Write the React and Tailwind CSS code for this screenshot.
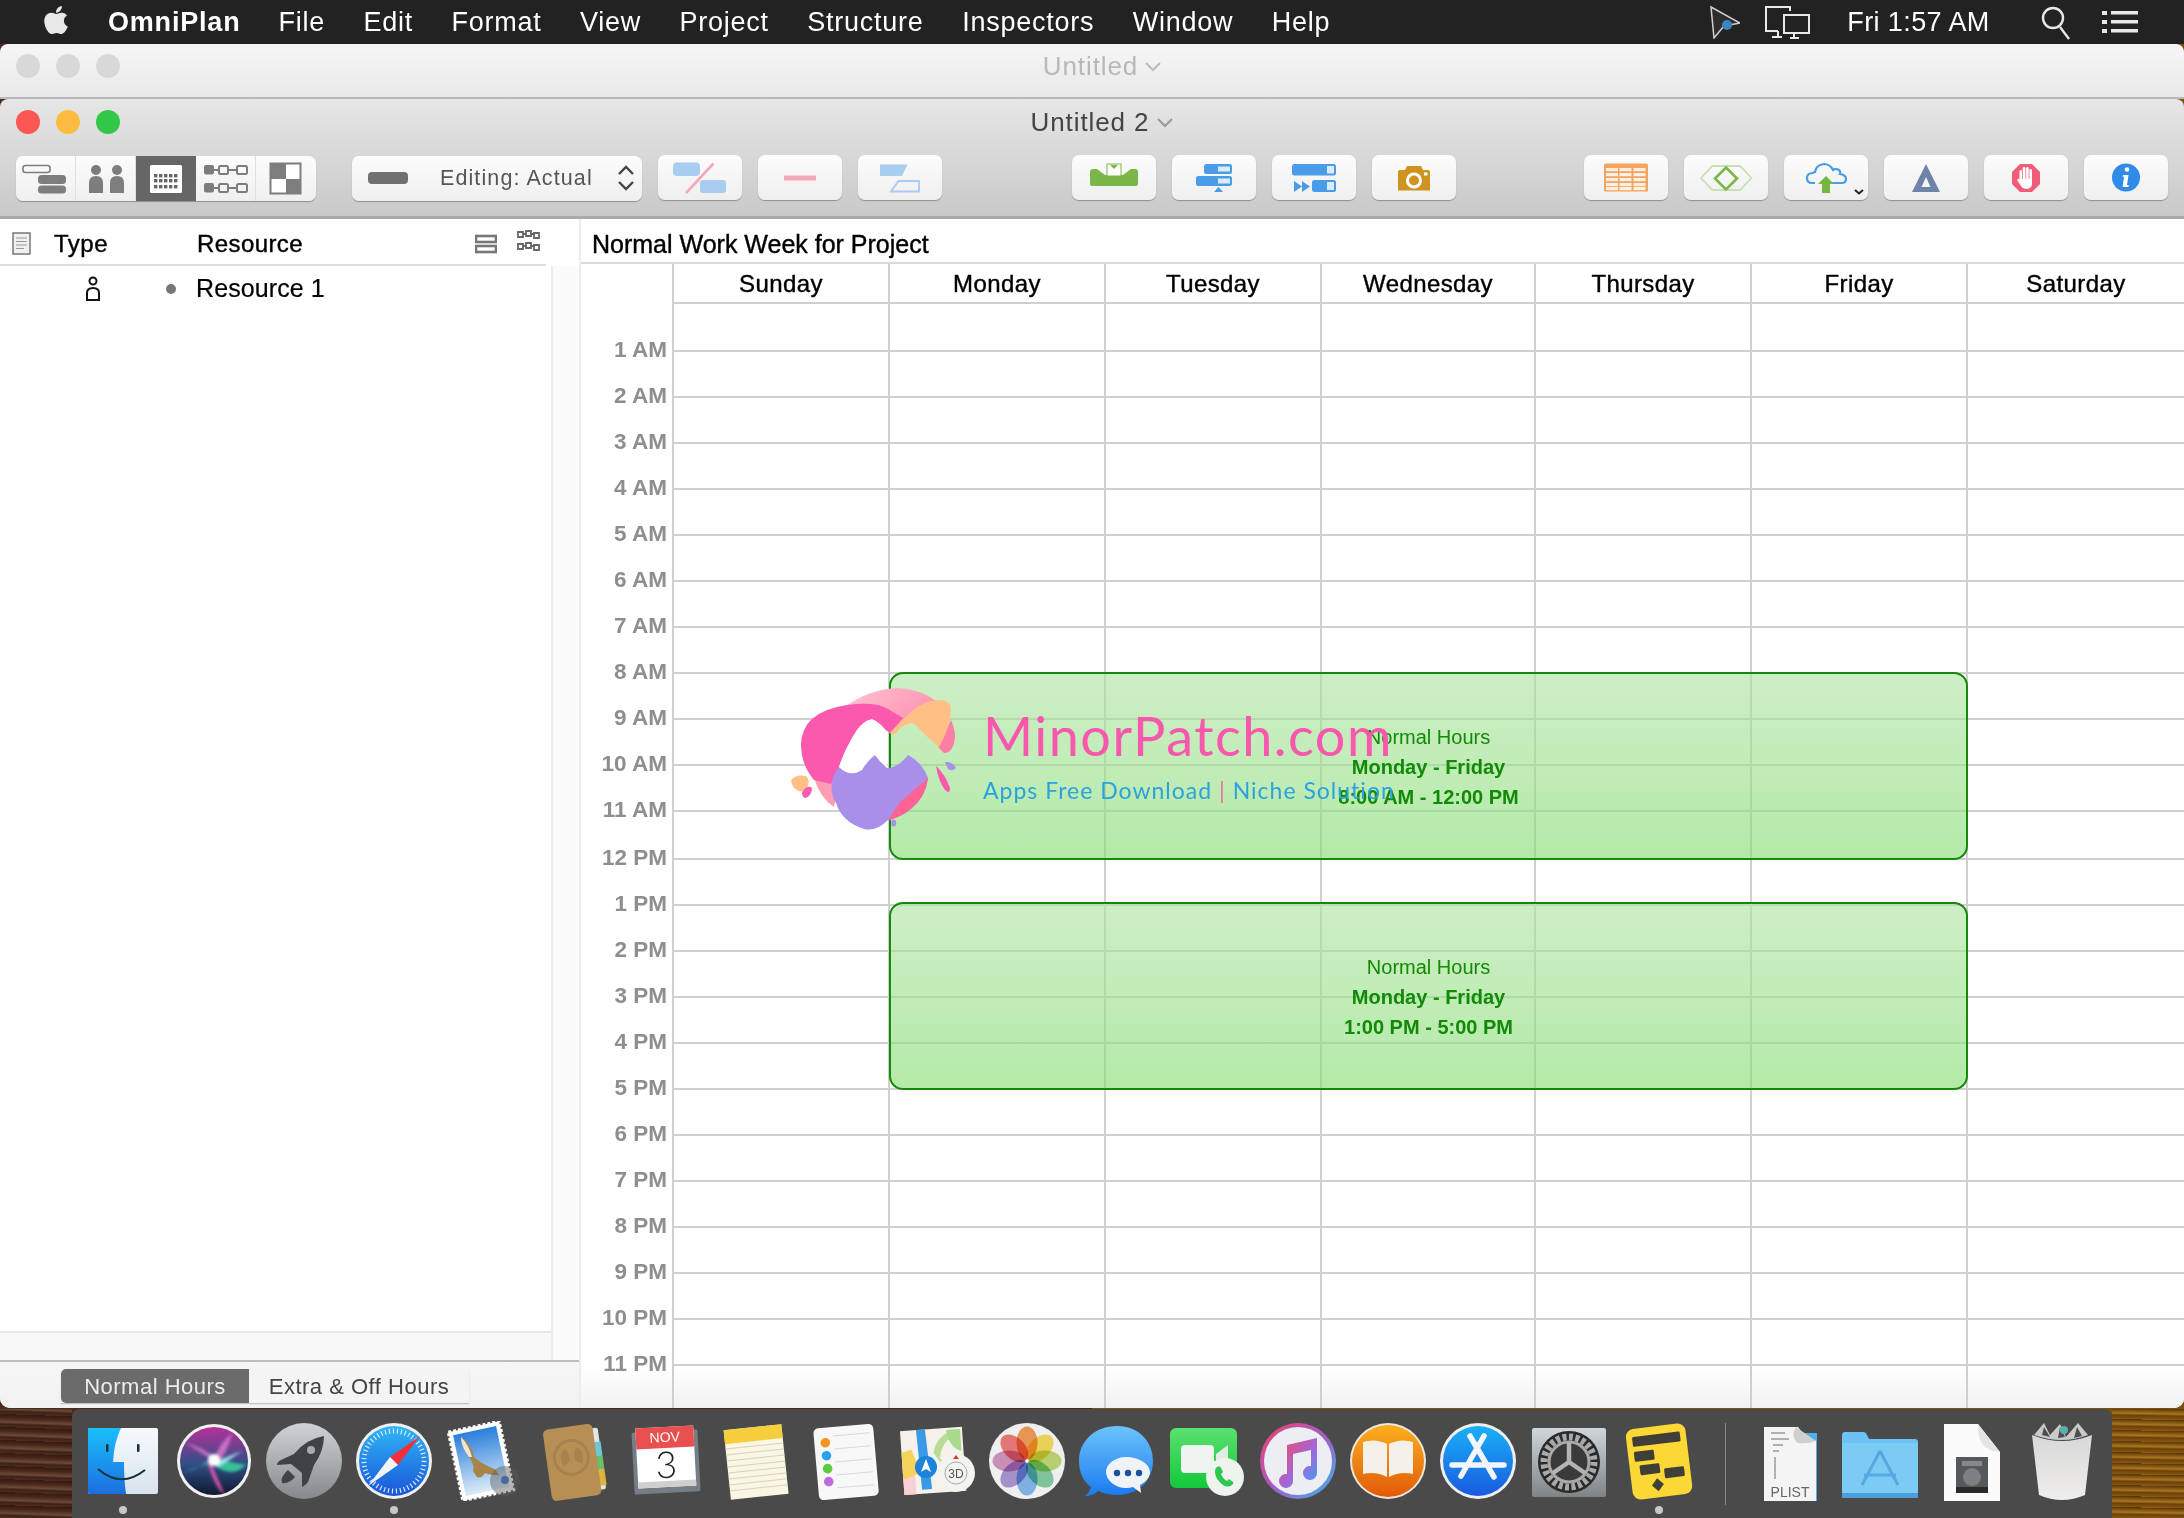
import React from "react";
import { FaApple } from "react-icons/fa";

const menuItems = ["File", "Edit", "Format", "View", "Project", "Structure", "Inspectors", "Window", "Help"];
const days = ["Sunday", "Monday", "Tuesday", "Wednesday", "Thursday", "Friday", "Saturday"];
const gridCols = "grid grid-cols-[91px_216px_216px_216px_214px_216px_216px_218px]";
const hourRows = [
    ["1 AM", "h-[48px]"], ["2 AM", "h-[46px]"], ["3 AM", "h-[46px]"], ["4 AM", "h-[46px]"],
    ["5 AM", "h-[46px]"], ["6 AM", "h-[46px]"], ["7 AM", "h-[46px]"], ["8 AM", "h-[46px]"],
    ["9 AM", "h-[46px]"], ["10 AM", "h-[46px]"], ["11 AM", "h-[46px]"], ["12 PM", "h-[48px]"],
    ["1 PM", "h-[46px]"], ["2 PM", "h-[46px]"], ["3 PM", "h-[46px]"], ["4 PM", "h-[46px]"],
    ["5 PM", "h-[46px]"], ["6 PM", "h-[46px]"], ["7 PM", "h-[46px]"], ["8 PM", "h-[46px]"],
    ["9 PM", "h-[46px]"], ["10 PM", "h-[46px]"], ["11 PM", "h-[46px]"],
];

const Light = ({ color }) => <div className={`w-[24px] h-[24px] rounded-full ${color}`} />;

const ToolButton = ({ children }) => (
    <div className="w-[84px] h-[45px] rounded-[7px] bg-gradient-to-b from-[#fcfcfc] to-[#efefef] shadow-[0_1px_1px_rgba(0,0,0,0.3)]">
        <svg width="84" height="45" viewBox="0 0 84 45">{children}</svg>
    </div>
);

const Segment = ({ active, last, children }) => (
    <div className={`h-[45px] ${active ? "w-[60px] bg-[#666666]" : last ? "w-[60px]" : "w-[60px] border-r border-[#e0e0e0]"}`}>
        <svg width="60" height="45" viewBox="0 0 60 45">{children}</svg>
    </div>
);

const ChainRow = ({ y }) => (
    <g>
        <rect x="8" y={y} width="10" height="9.5" rx="2" fill="#7d7d7d" />
        <rect x="23" y={y + 1} width="9" height="8" rx="1.5" fill="none" stroke="#7d7d7d" strokeWidth="2" />
        <rect x="41" y={y + 1} width="10" height="8" rx="1.5" fill="none" stroke="#7d7d7d" strokeWidth="2" />
        <path d={`M18 ${y + 5}h5M32 ${y + 5}h9`} stroke="#7d7d7d" strokeWidth="2" />
    </g>
);

const Toolbar = () => (
    <div className="flex items-start pl-[16px] pt-[10px]">
        <div className="flex w-[300px] h-[45px] rounded-[7px] overflow-hidden bg-gradient-to-b from-[#fcfcfc] to-[#efefef] shadow-[0_1px_1px_rgba(0,0,0,0.3)]">
            <Segment>
                <rect x="7" y="9.5" width="27" height="7" rx="2.5" fill="none" stroke="#7d7d7d" strokeWidth="1.6" />
                <rect x="22" y="19" width="28" height="9" rx="3.5" fill="#7d7d7d" />
                <rect x="22" y="29.5" width="28" height="8" rx="3.5" fill="#7d7d7d" />
            </Segment>
            <Segment>
                <circle cx="20" cy="14" r="5" fill="#7d7d7d" />
                <circle cx="41" cy="14" r="5" fill="#7d7d7d" />
                <path d="M13 37v-10q0-7 7-7t7 7v10zM34 37v-10q0-7 7-7t7 7v10z" fill="#7d7d7d" />
            </Segment>
            <Segment active>
                <rect x="14" y="9" width="32" height="28" rx="1.5" fill="#fff" />
                {[18, 23, 28, 33, 38].map(x => [18, 23, 29].map(y => <rect key={`${x}-${y}`} x={x} y={y} width="3.4" height="3.4" fill="#666" />))}
            </Segment>
            <Segment>
                <ChainRow y={9} />
                <ChainRow y={27} />
            </Segment>
            <Segment last>
                <rect x="14.5" y="7.5" width="30" height="30" fill="#fff" stroke="#7d7d7d" strokeWidth="2" />
                <rect x="15" y="8" width="15" height="15" fill="#7d7d7d" />
                <rect x="30" y="23" width="15" height="15" fill="#7d7d7d" />
            </Segment>
        </div>

        <div className="ml-[36px] w-[290px] h-[45px] rounded-[7px] bg-gradient-to-b from-[#fcfcfc] to-[#efefef] shadow-[0_1px_1px_rgba(0,0,0,0.3)] flex items-center pl-[16px]">
            <div className="w-[40px] h-[12px] rounded-[4px] bg-[#707070]" />
            <span className="ml-[32px] text-[21.5px] text-[#555555] tracking-[1.1px]">Editing: Actual</span>
            <svg className="ml-[24px]" width="18" height="28" viewBox="0 0 18 28" fill="none" stroke="#444" strokeWidth="2.4">
                <path d="M2 10l7-7 7 7M2 18l7 7 7-7" />
            </svg>
        </div>

        <div className="ml-[16px] flex gap-[16px] -mt-[1px]">
            <ToolButton>
                <rect x="15" y="7.5" width="27" height="13.5" rx="4" fill="#a8cdf0" />
                <rect x="42" y="25" width="26" height="13" rx="3" fill="#a8cdf0" />
                <path d="M55.5 8.5L28 38" stroke="#f4a9bb" strokeWidth="2.6" />
            </ToolButton>
            <ToolButton>
                <rect x="26" y="20.5" width="32" height="5" fill="#f4a9bb" />
            </ToolButton>
            <ToolButton>
                <path d="M22 9.5h27.5L44 21H22z" fill="#a8cdf0" />
                <path d="M40.5 26h20.5v10.5H33z" fill="none" stroke="#a8cdf0" strokeWidth="2" />
            </ToolButton>
        </div>

        <div className="ml-[130px] flex gap-[16px] -mt-[1px]">
            <ToolButton>
                <path d="M18 17q0-3 3-3h4l8 6h18l8-6h4q3 0 3 3v12q0 2-2 2H20q-2 0-2-2z" fill="#7ab648" />
                <rect x="35" y="9" width="14" height="12" fill="#fff" stroke="#7ab648" strokeWidth="1" />
                <path d="M38 10h8l-4 4z" fill="#7ab648" />
            </ToolButton>
            <ToolButton>
                <rect x="32" y="9" width="28" height="10" rx="2.5" fill="#4a9be8" />
                <rect x="46" y="11.5" width="12" height="5" fill="#dcebfa" />
                <rect x="24" y="21" width="36" height="10" rx="2.5" fill="#4a9be8" />
                <rect x="46" y="23.5" width="12" height="5" fill="#dcebfa" />
                <path d="M46.5 32l4.5 5h-9z" fill="#4a9be8" />
            </ToolButton>
            <ToolButton>
                <rect x="20" y="9" width="44" height="11.5" rx="2.5" fill="#4a9be8" />
                <rect x="55" y="11" width="7" height="7.5" fill="#dcebfa" />
                <rect x="40" y="25" width="24" height="12" rx="2.5" fill="#4a9be8" />
                <rect x="55" y="27" width="7" height="8" fill="#dcebfa" />
                <path d="M22 26l8 5.5-8 5.5zM30 26l8 5.5-8 5.5z" fill="#4a9be8" />
            </ToolButton>
            <ToolButton>
                <path d="M26 17q0-2 2-2h5l2-4h14l2 4h5q2 0 2 2v18.5H26z" fill="#cf9320" />
                <circle cx="42" cy="25.5" r="6.5" fill="none" stroke="#fff" strokeWidth="3" />
                <rect x="52" y="17.5" width="3.5" height="3" fill="#fff" />
            </ToolButton>
        </div>

        <div className="ml-[128px] flex gap-[16px] -mt-[1px]">
            <ToolButton>
                <rect x="20" y="8.5" width="44" height="28" rx="1.5" fill="#f4a460" />
                {[22, 35.5, 49.5].map(x => [13, 18, 23, 28, 32].map(y => <rect key={`${x}-${y}`} x={x} y={y} width="12" height="3.2" fill="#fdf0e0" />))}
            </ToolButton>
            <ToolButton>
                <path d="M17 23l11.5-12h27.5l11.5 12-11.5 12H28.5z" fill="none" stroke="#c8e0b8" strokeWidth="1.8" />
                <path d="M42 12.5l11 11-11 11-11-11z" fill="none" stroke="#7ab648" strokeWidth="2.6" />
            </ToolButton>
            <ToolButton>
                <path d="M31 28h-3q-5 0-5-5t6-5q1-1 2-1 1-7 9-8 6 0 9 6 3-2 6 0 2 2 1 4 6 1 6 5 0 4-4 4H48" fill="none" stroke="#4a9be8" strokeWidth="2.2" />
                <path d="M42 21l8 8h-4v9h-8v-9h-4z" fill="#76b83f" />
                <path d="M71 35l4 3.5 4-3.5" fill="none" stroke="#222" strokeWidth="2" />
            </ToolButton>
            <ToolButton>
                <path fillRule="evenodd" d="M42 9l14 28H28zM42 22l-4.5 10h9z" fill="#6f82a8" />
            </ToolButton>
            <ToolButton>
                <path d="M36 9h12l8 8v12l-8 8H36l-8-8V17z" fill="#f25c78" />
                <rect x="35.5" y="15" width="2.6" height="12" rx="1.3" fill="#fff" />
                <rect x="38.8" y="12" width="2.6" height="14" rx="1.3" fill="#fff" />
                <rect x="42.1" y="12" width="2.6" height="14" rx="1.3" fill="#fff" />
                <rect x="45.4" y="14" width="2.6" height="14" rx="1.3" fill="#fff" />
                <path d="M35.5 24h12.5v5q0 4-5 5-4 0-6-3l-4-6q1-2 3-1z" fill="#fff" />
            </ToolButton>
            <ToolButton>
                <circle cx="42" cy="22.5" r="14" fill="#2f8ae8" />
                <circle cx="43" cy="14.5" r="2.3" fill="#fff" />
                <path d="M39 20h5.5l-1.500 10 2 .5-.5 1.5h-6l1.5-10-1.5-.5z" fill="#fff" />
            </ToolButton>
        </div>
    </div>
);

const LeftPane = () => (
    <div className="w-[581px] flex flex-col border-r-2 border-[#ececec]">
        <div className="h-[47px] flex items-center pt-[5px] border-b-2 border-[#dcdcdc] mr-[33px]">
            <svg className="ml-[12px]" width="19" height="23" viewBox="0 0 19 23">
                <rect x="1" y="1" width="17" height="21" fill="#f0f0f0" stroke="#777" strokeWidth="1.5" />
                <path d="M4 6h11M4 9.5h11M4 13h11M4 16.5h8" stroke="#999" strokeWidth="1.2" />
            </svg>
            <span className="ml-[23px] text-[24px] tracking-[0.5px] [-webkit-text-stroke:0.4px_#000] text-black">Type</span>
            <span className="ml-[89px] text-[24px] tracking-[0.4px] [-webkit-text-stroke:0.4px_#000] text-black">Resource</span>
            <svg className="ml-[172px]" width="22" height="20" viewBox="0 0 22 20" fill="none" stroke="#777" strokeWidth="2.6">
                <rect x="1" y="2" width="20" height="6" />
                <rect x="1" y="12" width="20" height="6" />
            </svg>
            <svg className="ml-[20px] -mt-[3px]" width="23" height="24" viewBox="0 0 23 24" fill="none" stroke="#666" strokeWidth="1.8">
                <path d="M1 2h5v5H1zM9 1h5v5H9zM17 3h5v5h-5zM6 4h3M14 4h3M1 14h5v5H1zM9 13h5v5H9zM17 15h5v5h-5zM6 16h3M14 16h3" />
            </svg>
        </div>
        <div className="flex-1 flex min-h-0">
            <div className="w-[551px] flex flex-col">
                <div className="flex-1 bg-white border-b-2 border-[#e8e8e8]">
                    <div className="h-[46px] flex items-center">
                        <svg className="ml-[84px]" width="18" height="26" viewBox="0 0 18 26" fill="none" stroke="#111" strokeWidth="2">
                            <circle cx="9" cy="5" r="3.5" />
                            <path d="M3 24v-7q0-5 6-5t6 5v7z" />
                        </svg>
                        <div className="ml-[64px] w-[10px] h-[10px] rounded-full bg-[#777777]" />
                        <span className="ml-[20px] text-[25px] tracking-[0.1px] [-webkit-text-stroke:0.2px_#000] text-black">Resource 1</span>
                    </div>
                </div>
                <div className="h-[27px] bg-[#f8f8f8]" />
            </div>
            <div className="w-[28px] bg-[#fbfbfb] border-l-2 border-[#ececec]" />
        </div>
        <div className="h-[48px] border-t-2 border-[#bdbdbd] bg-gradient-to-b from-[#f6f6f6] to-[#f1f1f1] pt-[7px] pl-[61px]">
            <div className="flex h-[34px] w-[408px] shadow-[0_1px_1px_rgba(0,0,0,0.2)]">
                <div className="w-[188px] rounded-l-[5px] bg-[#6b6b6b] text-[#ececec] text-[22px] tracking-[0.5px] flex items-center justify-center">Normal Hours</div>
                <div className="w-[220px] bg-[#f4f4f4] text-[#444444] text-[22px] tracking-[0.5px] flex items-center justify-center">Extra &amp; Off Hours</div>
            </div>
        </div>
    </div>
);

const HoursBlock = ({ top, hours }) => (
    <div className={`absolute left-[308px] w-[1079px] ${top} rounded-[14px] border-2 border-[#148a08] bg-[linear-gradient(180deg,rgba(172,227,160,0.6),rgba(130,220,110,0.6))] flex flex-col items-center justify-center pt-[3px] text-[#118a05] text-[20px] leading-[30px]`}>
        <span>Normal Hours</span>
        <span className="font-bold">Monday - Friday</span>
        <span className="font-bold">{hours}</span>
    </div>
);

const Calendar = () => (
    <div className="flex-1 flex flex-col min-w-0 bg-white">
        <div className="h-[45px] flex items-center pl-[11px] pt-[8px] border-b-2 border-[#d8d8d8]">
            <span className="text-[25px] [-webkit-text-stroke:0.4px_#000] text-black">Normal Work Week for Project</span>
        </div>
        <div className={`${gridCols} h-[40px]`}>
            <div />
            {days.map(d => (
                <div key={d} className="border-l-2 border-b-2 border-[#cfcfcf] pt-[2px] flex items-center justify-center text-[24px] tracking-[0.4px] [-webkit-text-stroke:0.4px_#000] text-black">{d}</div>
            ))}
        </div>
        <div className="relative flex-1 flex flex-col min-h-0">
            {hourRows.map(([label, height]) => (
                <div key={label} className={`${gridCols} ${height}`}>
                    <div className="relative z-10 flex items-end justify-end pr-[5px]">
                        <span className="-mb-[11px] leading-[26px] text-[22.5px] font-bold text-[#8e8e8e]">{label}</span>
                    </div>
                    {days.map(d => <div key={d} className="border-l-2 border-b-2 border-[#cfcfcf]" />)}
                </div>
            ))}
            <div className={`${gridCols} flex-1 bg-gradient-to-b from-white to-[#f2f2f2]`}>
                <div />
                {days.map(d => <div key={d} className="border-l-2 border-[#cfcfcf]" />)}
            </div>
            <HoursBlock top="top-[368px] h-[188px]" hours="8:00 AM - 12:00 PM" />
            <HoursBlock top="top-[598px] h-[188px]" hours="1:00 PM - 5:00 PM" />
        </div>
    </div>
);

const Watermark = () => (
    <div className="absolute left-[790px] top-[688px] flex items-start pointer-events-none">
        <svg width="170" height="145" viewBox="0 0 170 145">
            <defs>
                <linearGradient id="wmTop" x1="0" y1="0" x2="1" y2="0.6">
                    <stop offset="0" stopColor="#ffc3d2" />
                    <stop offset="1" stopColor="#ff8fb0" />
                </linearGradient>
            </defs>
            <path d="M56 18Q80 1 108 0Q135 2 149 16L100 45Z" fill="url(#wmTop)" />
            <path d="M24 90Q30 110 44 119L50 90Z" fill="#ff9db5" />
            <path d="M11 59Q10 24 57 17Q85 13 98 21Q106 26 113 30L100 45L82 31Q72 33 66 44Q55 62 49 79L41 96L24 92Q12 78 11 59Z" fill="#fb59ae" />
            <path d="M82 31Q90 34 97 44V80L85 67Q78 72 72 82Q64 88 49 79Q55 60 67 42Q74 33 82 31Z" fill="#fff" />
            <path d="M161 32Q167 45 164 56Q160 66 154 65L148 59Z" fill="#fb7ea6" />
            <path d="M100 45Q112 32 123 22Q136 12 149 12Q161 12 161 23Q160 40 149 59Q134 46 123 35Q112 36 106 45Q102 48 100 45Z" fill="#ffbf85" />
            <path d="M85 67Q90 74 97 80Q108 80 118 67Q132 74 138 90Q136 108 122 120Q110 130 98 132Q86 144 74 141Q52 134 46 115Q40 104 42 95Q44 84 49 79Q60 90 72 82Q78 72 85 67Z" fill="#a98fe9" />
            <path d="M138 90Q136 108 122 120Q110 130 98 132L110 114Z" fill="#fd6495" />
            <path d="M1 92Q6 86 16 88Q20 92 18 98Q14 105 8 103Q2 100 1 92Z" fill="#ffbf85" />
            <path d="M12 104Q18 96 22 100Q22 107 16 110Q12 110 12 104Z" fill="#fb59ae" />
            <path d="M146 78Q155 86 160 100Q160 107 155 102Q148 92 146 78Z" fill="#fb59ae" />
            <path d="M155 74Q162 73 166 80Q162 84 158 81Z" fill="#a98fe9" />
            <ellipse cx="103.7" cy="135" rx="2.5" ry="3.5" fill="#a98fe9" />
        </svg>
        <div className="ml-[23px] mt-[18px] font-['Lato',sans-serif] whitespace-nowrap">
            <div className="text-[54px] leading-[60px] tracking-[1.5px] text-[#f857ad]">MinorPatch.com</div>
            <div className="mt-[9px] text-[23px] leading-[30px] tracking-[1px] text-[#2ba2dd]">
                Apps Free Download <span className="text-[#f06aa8]">|</span> Niche Solution
            </div>
        </div>
    </div>
);

const DockIcon = ({ children, running }) => (
    <div className="w-[90.35px] flex flex-col items-center">
        <svg width="80" height="80" viewBox="0 0 80 80" className="mt-[12px]">{children}</svg>
        {running ? <div className="mt-[5px] w-[8px] h-[8px] rounded-full bg-[#c8c8c8]" /> : null}
    </div>
);

const Dock = () => (
    <div className="h-[109px] flex overflow-hidden">
        <div className="w-[72px] bg-[repeating-linear-gradient(2deg,#4e2c1e_0px,#3e2218_3px,#6b4a3a_5px,#4a281a_9px,#35190f_13px)]" />
        <div className="w-[2040px] bg-[#4a4a4a] rounded-t-[8px] flex pl-[6px]">
            <DockIcon running>
                <defs>
                    <linearGradient id="fi" x1="0" y1="0" x2="0" y2="1"><stop offset="0" stopColor="#19c0fb" /><stop offset="1" stopColor="#1c6ee0" /></linearGradient>
                    <linearGradient id="fw" x1="0" y1="0" x2="0" y2="1"><stop offset="0" stopColor="#f6f9fc" /><stop offset="1" stopColor="#d8e3ee" /></linearGradient>
                </defs>
                <rect x="5" y="7" width="70" height="66" rx="2" fill="url(#fw)" />
                <path d="M7 7h31q-7 14-8 34h11q0 18 2 32H7q-2 0-2-2V9q0-2 2-2z" fill="url(#fi)" />
                <rect x="23" y="23" width="2.5" height="8" rx="1" fill="#133" />
                <rect x="54" y="23" width="2.5" height="8" rx="1" fill="#133" />
                <path d="M15 48Q38 68 62 49" fill="none" stroke="#133" strokeWidth="2" />
            </DockIcon>
            <DockIcon>
                <defs>
                    <linearGradient id="sr" x1="0" y1="0" x2="0" y2="1"><stop offset="0" stopColor="#b8309a" /><stop offset="0.55" stopColor="#2f4f86" /><stop offset="1" stopColor="#10182e" /></linearGradient>
                    <filter id="sb"><feGaussianBlur stdDeviation="1.5" /></filter>
                </defs>
                <circle cx="40" cy="40" r="37" fill="#f1f1f1" />
                <circle cx="40" cy="40" r="34" fill="url(#sr)" />
                <g filter="url(#sb)">
                    <path d="M40 40L12 22Q28 26 40 36Z M40 38Q46 22 58 12Q54 30 44 42Z" fill="#e07ad0" opacity="0.8" />
                    <path d="M40 40L8 52Q26 48 42 34Z" fill="#4fd6e8" opacity="0.9" />
                    <path d="M40 38L72 44Q58 58 40 44Z" fill="#3bd69c" opacity="0.85" />
                    <path d="M36 40L50 72Q44 72 34 44Z" fill="#e955b4" opacity="0.9" />
                    <path d="M38 42L68 30Q54 40 44 46Z" fill="#a5eef4" opacity="0.9" />
                    <circle cx="40" cy="39" r="6" fill="#fff" />
                </g>
            </DockIcon>
            <DockIcon>
                <defs>
                    <linearGradient id="lp" x1="0" y1="0" x2="0" y2="1"><stop offset="0" stopColor="#cfd3d5" /><stop offset="1" stopColor="#84898c" /></linearGradient>
                </defs>
                <circle cx="40" cy="40" r="38" fill="url(#lp)" />
                <path d="M60 15Q42 18 30 33L17 39Q13 41 13 44L27 43L38 52L38 66Q42 64 44 61L50 44Q60 30 60 15Z" fill="#3f4347" />
                <path d="M24 49Q16 56 18 62Q25 63 31 56Z" fill="#3f4347" />
                <circle cx="47" cy="29" r="4" fill="#a8acaf" />
            </DockIcon>
            <DockIcon running>
                <defs>
                    <linearGradient id="sa" x1="0" y1="0" x2="0" y2="1"><stop offset="0" stopColor="#2fb6f6" /><stop offset="1" stopColor="#1a55d8" /></linearGradient>
                </defs>
                <circle cx="40" cy="40" r="38" fill="#f0f0f0" />
                <circle cx="40" cy="40" r="35" fill="url(#sa)" />
                <circle cx="40" cy="40" r="30" fill="none" stroke="#d6e8fb" strokeWidth="5" strokeDasharray="1.2 2.8" />
                <path d="M66 15L36 36L44 44Z" fill="#f0313c" />
                <path d="M14 65L36 36L44 44Z" fill="#f4f4f4" />
            </DockIcon>
            <DockIcon>
                <defs>
                    <linearGradient id="ma" x1="0" y1="0" x2="0" y2="1"><stop offset="0" stopColor="#2a7fdc" /><stop offset="1" stopColor="#dcebf7" /></linearGradient>
                </defs>
                <g transform="translate(-4 0) rotate(-12 40 40)">
                    <rect x="14" y="5" width="52" height="70" fill="#fff" stroke="#fff" strokeWidth="3" strokeDasharray="3 2" />
                    <rect x="18" y="9" width="44" height="62" fill="url(#ma)" />
                </g>
                <path d="M16 16Q26 22 29 36Q38 44 50 48L54 54Q44 54 40 52Q36 58 32 56L28 50Q30 44 24 36Q16 26 16 16Z" fill="#a98448" />
                <path d="M16 16Q24 24 27 36L24 36Q16 26 16 16Z" fill="#eee6d8" />
                <circle cx="60" cy="60" r="15" fill="#5a5a5e" opacity="0.45" />
                <circle cx="60" cy="59" r="4" fill="#4a6a9a" />
            </DockIcon>
            <DockIcon>
                <g transform="rotate(-8 40 40)">
                    <rect x="58" y="10" width="9" height="62" rx="2" fill="#dfe6e0" />
                    <rect x="61" y="24" width="7" height="14" fill="#6cc8d8" />
                    <rect x="61" y="38" width="7" height="14" fill="#6bbf6b" />
                    <rect x="61" y="52" width="7" height="16" fill="#e2b33c" />
                    <rect x="12" y="5" width="50" height="72" rx="5" fill="#b78f55" />
                    <circle cx="37" cy="36" r="17" fill="none" stroke="#a8824e" strokeWidth="3" />
                    <path d="M28 44q-4-14 3-17 5 2 4 12zM40 39q-1-10 4-12 7 3 3 17z" fill="#a8824e" />
                </g>
            </DockIcon>
            <DockIcon>
                <g transform="rotate(-3 40 40)">
                    <rect x="8" y="10" width="66" height="62" rx="2" fill="#7f8b96" opacity="0.8" />
                    <rect x="12" y="6" width="58" height="60" fill="#fff" />
                    <rect x="12" y="6" width="58" height="21" fill="#e8504f" />
                    <rect x="12" y="60" width="58" height="6" fill="#cfcfcf" />
                    <text x="41" y="21" textAnchor="middle" fontSize="14" fill="#fff" className="font-['Liberation_Sans',sans-serif]">NOV</text>
                    <text x="41" y="57" textAnchor="middle" fontSize="37" fill="#222" className="font-['Lato',sans-serif] font-light">3</text>
                </g>
            </DockIcon>
            <DockIcon>
                <g transform="rotate(-6 40 40)">
                    <rect x="11" y="6" width="58" height="70" fill="#f9f6e4" />
                    <rect x="11" y="6" width="58" height="14" fill="#f6cd3c" />
                    {[25, 31, 37, 43, 49, 55, 61, 67].map(y => <path key={y} d={`M11 ${y}H69`} stroke="#d6d2bd" strokeWidth="1" />)}
                </g>
            </DockIcon>
            <DockIcon>
                <g transform="rotate(-5 40 40)">
                    <rect x="10" y="5" width="60" height="72" rx="5" fill="#f8f8f8" />
                    <circle cx="21" cy="20" r="4.8" fill="#f59520" />
                    <circle cx="21" cy="33" r="4.8" fill="#29a0ee" />
                    <circle cx="21" cy="46" r="4.8" fill="#5cc93f" />
                    <circle cx="21" cy="59" r="4.8" fill="#c06ae0" />
                    {[14, 27, 40, 53, 66].map(y => <path key={y} d={`M29 ${y}H66`} stroke="#d9d9d9" strokeWidth="1" />)}
                </g>
            </DockIcon>
            <DockIcon>
                <g transform="rotate(-4 36 38)">
                    <rect x="6" y="8" width="62" height="64" fill="#f4f2ea" />
                    <path d="M6 36h12v36H6z" fill="#f8cfd4" />
                    <path d="M6 30l10-3 8 24-18 6z" fill="#f7d35c" />
                    <path d="M22 8h9l3 60H24z" fill="#3a9ae8" />
                    <path d="M38 32Q42 14 62 10l3 4Q46 20 44 38l12 10-4 6z" fill="#b9dc96" />
                    <path d="M52 10h14v22Q54 28 52 10z" fill="#a9d98c" />
                </g>
                <circle cx="30" cy="46" r="11" fill="#1c84db" />
                <path d="M30 38l5 13-5-3-5 3z" fill="#fff" />
                <circle cx="60" cy="52" r="19" fill="#f3f3f0" />
                <circle cx="60" cy="52" r="11" fill="none" stroke="#aaa" strokeWidth="1" />
                <text x="60" y="57" textAnchor="middle" fontSize="12" fill="#555" className="font-['Liberation_Sans',sans-serif]">3D</text>
                <path d="M60 34l3 4h-6z" fill="#d33" />
            </DockIcon>
            <DockIcon>
                <circle cx="40" cy="40" r="38" fill="#efefef" />
                {[["#f5a05a", 0], ["#f8df5e", 45], ["#c4dd78", 90], ["#86d0a4", 135], ["#86bcf0", 180], ["#b09ad8", 225], ["#d899c4", 270], ["#f07e7e", 315]].map(([c, a]) => (
                    <ellipse key={a} cx="40" cy="22" rx="10.5" ry="16.5" fill={c} className="mix-blend-multiply" transform={`rotate(${a} 40 40)`} />
                ))}
                <circle cx="40" cy="40" r="1.5" fill="#fff" />
            </DockIcon>
            <DockIcon>
                <defs>
                    <linearGradient id="me" x1="0" y1="0" x2="0" y2="1"><stop offset="0" stopColor="#6cc4fb" /><stop offset="1" stopColor="#1a7af0" /></linearGradient>
                </defs>
                <path d="M40 5C18 5 2 20 2 40c0 12 5 21 12 26q-1 5-6 9 8 0 13-5 9 4 19 4c22 0 36-15 36-34S62 5 40 5z" fill="url(#me)" />
                <path d="M49 36c-11 0-20 7-20 15s9 16 20 16q4 0 7-1l8 6-1-8c6-3 10-8 10-13 0-8-11-15-24-15z" fill="#eef3f8" />
                <circle cx="40" cy="52" r="3.2" fill="#1c4f9c" />
                <circle cx="51" cy="52" r="3.2" fill="#1c4f9c" />
                <circle cx="62" cy="52" r="3.2" fill="#1c4f9c" />
            </DockIcon>
            <DockIcon>
                <defs>
                    <linearGradient id="ft" x1="0" y1="0" x2="0" y2="1"><stop offset="0" stopColor="#5be06f" /><stop offset="1" stopColor="#12c93a" /></linearGradient>
                </defs>
                <rect x="3" y="7" width="67" height="60" rx="6" fill="url(#ft)" />
                <rect x="14" y="24" width="33" height="28" rx="4" fill="#eef4ef" />
                <path d="M49 33l12-9v28l-12-9z" fill="#dfeee0" />
                <circle cx="58" cy="56" r="19" fill="#eef3ee" />
                <path d="M50 46q3-2 4 1l2 4-2 2q2 5 6 7l2-2 4 3q1 2-1 3-4 3-9 0-8-6-8-13 0-4 2-5z" fill="#2fc84c" />
            </DockIcon>
            <DockIcon>
                <defs>
                    <linearGradient id="itr" x1="0" y1="0" x2="1" y2="1"><stop offset="0" stopColor="#f0426a" /><stop offset="0.5" stopColor="#a65ac8" /><stop offset="1" stopColor="#36b8ec" /></linearGradient>
                    <linearGradient id="itn" x1="0" y1="0" x2="1" y2="1"><stop offset="0" stopColor="#f8485e" /><stop offset="0.6" stopColor="#9a6ae0" /><stop offset="1" stopColor="#3da2f0" /></linearGradient>
                </defs>
                <circle cx="40" cy="40" r="38" fill="url(#itr)" />
                <circle cx="40" cy="40" r="34" fill="#edeef3" />
                <path fillRule="evenodd" d="M29 24L59 17V52a7 7 0 11-6-7V29L35 33V60a7 7 0 11-6-7z" fill="url(#itn)" />
            </DockIcon>
            <DockIcon>
                <defs>
                    <linearGradient id="bo" x1="0" y1="0" x2="0" y2="1"><stop offset="0" stopColor="#fbaf1e" /><stop offset="1" stopColor="#e05a08" /></linearGradient>
                </defs>
                <circle cx="40" cy="40" r="38" fill="#f0e8dc" />
                <circle cx="40" cy="40" r="36" fill="url(#bo)" />
                <path d="M39 23Q28 17 15 21V53Q28 50 39 56ZM41 23Q52 17 65 21V53Q52 50 41 56Z" fill="#f4f0ea" />
            </DockIcon>
            <DockIcon>
                <defs>
                    <linearGradient id="ap" x1="0" y1="0" x2="0" y2="1"><stop offset="0" stopColor="#19b0f6" /><stop offset="1" stopColor="#1a5ae0" /></linearGradient>
                </defs>
                <circle cx="40" cy="40" r="38" fill="#efefef" />
                <circle cx="40" cy="40" r="35" fill="url(#ap)" />
                <path d="M46 15L23 55M32 15L56 56M14 44H66" stroke="#f2f6fb" strokeWidth="5.5" strokeLinecap="round" fill="none" />
            </DockIcon>
            <DockIcon>
                <defs>
                    <linearGradient id="sp" x1="0" y1="0" x2="0" y2="1"><stop offset="0" stopColor="#cfd7dc" /><stop offset="1" stopColor="#7f8486" /></linearGradient>
                </defs>
                <rect x="3" y="7" width="74" height="69" rx="2" fill="url(#sp)" />
                <circle cx="40" cy="41" r="31" fill="#2a2a2a" />
                <circle cx="40" cy="41" r="25" fill="none" stroke="#a9a9a9" strokeWidth="7" strokeDasharray="4 2.5" />
                <circle cx="40" cy="41" r="20" fill="#3a3a3a" stroke="#a9a9a9" strokeWidth="3" />
                <path d="M40 41V22M40 41L24 52M40 41L56 52" stroke="#b4b4b4" strokeWidth="4.5" />
            </DockIcon>
            <DockIcon running>
                <g transform="rotate(-7 40 40)">
                    <rect x="10" y="5" width="60" height="71" rx="8" fill="#fbd835" />
                    <rect x="16" y="13" width="48" height="10" rx="1.5" fill="#3f3f38" />
                    <rect x="16" y="28" width="20" height="10" rx="1.5" fill="#3f3f38" />
                    <rect x="20" y="42" width="20" height="10" rx="1.5" fill="#3f3f38" />
                    <rect x="44" y="48" width="20" height="10" rx="1.5" fill="#3f3f38" />
                    <path d="M36 57l6 6.5-6 6.5-6-6.5z" fill="#3f3f38" />
                </g>
            </DockIcon>
            <div className="w-[42px] flex justify-center pt-[14px]">
                <div className="w-px h-[82px] bg-[#8a8a8a]" />
            </div>
            <DockIcon>
                <rect x="40" y="12" width="26" height="68" fill="#4fb0ea" />
                <path d="M13 6h34q5 8 18 14v60H13z" fill="#f4f4f4" />
                <path d="M45 6q-6 10 2 16 10 1 18-2z" fill="#cfcfcf" />
                <path d="M20 12h14M20 18h18M22 24h10M22 30h6M24 36v22" stroke="#b0b0b0" strokeWidth="2" fill="none" />
                <text x="39" y="76" textAnchor="middle" fontSize="14" fill="#666" className="font-['Liberation_Sans',sans-serif]">PLIST</text>
            </DockIcon>
            <DockIcon>
                <path d="M0 14q0-3 3-3h18q3 0 4 3l2 4h46q3 0 3 3v53q0 3-3 3H3q-3 0-3-3z" fill="#6cc2f2" />
                <path d="M0 22h76v52H0z" fill="#7ccbf5" />
                <path d="M0 72h76v5H0z" fill="#4a9fda" />
                <path d="M38 30L20 64M38 30l18 34M22 54h32" stroke="#55a9e0" strokeWidth="3" fill="none" />
            </DockIcon>
            <DockIcon>
                <path d="M12 3h34l22 28v49H12z" fill="#fbfbfb" />
                <path d="M46 3q-2 26 22 28z" fill="#e4e4e4" />
                <rect x="24" y="36" width="32" height="36" fill="#55595c" />
                <rect x="30" y="40" width="20" height="5" fill="#888" />
                <circle cx="40" cy="56" r="9" fill="#7b8083" />
                <rect x="24" y="66" width="32" height="6" fill="#2a2a2a" />
            </DockIcon>
            <DockIcon>
                <defs>
                    <linearGradient id="tr" x1="0" y1="0" x2="0" y2="1"><stop offset="0" stopColor="#d8d8d8" /><stop offset="1" stopColor="#f0eeec" /></linearGradient>
                </defs>
                <path d="M10 14Q40 26 70 14L63 74Q40 84 17 74Z" fill="url(#tr)" />
                <path d="M12 14L22 2L28 14L38 3L44 16L56 2L66 14Q40 24 12 14Z" fill="#c8cbcb" />
                <path d="M22 6l6 10-8-2zM38 6l5 10-7 1zM55 6l5 9-8 2z" fill="#4e4e52" />
                <circle cx="42" cy="9" r="4" fill="#5ab0b0" />
            </DockIcon>
        </div>
        <div className="w-[72px] bg-[repeating-linear-gradient(1deg,#8a5a12_0px,#6b4008_4px,#a9761f_6px,#5a3608_11px)]" />
    </div>
);

const MenuBar = () => (
    <div className="h-[44px] bg-[#222222] flex items-center text-white text-[27px] tracking-[0.75px] pl-[40px]">
        <FaApple size={32} className="text-[#e8e8e8] -mt-[4px]" />
        <span className="ml-[36px] font-bold tracking-[0.8px] mr-[38px]">OmniPlan</span>
        <div className="flex gap-[38.5px]">
            {menuItems.map(m => <span key={m}>{m}</span>)}
        </div>
        <svg className="ml-[380px]" width="30" height="34" viewBox="0 0 30 34">
            <path d="M1 2L30 18L14 21L4 33Z" fill="#2d2d2d" stroke="#d0d0d0" strokeWidth="1.5" />
            <circle cx="17" cy="20" r="5" fill="#3a86c0" />
        </svg>
        <svg className="ml-[24px]" width="46" height="34" viewBox="0 0 46 34" fill="none" stroke="#e8e8e8" strokeWidth="2">
            <path d="M26 6V2H2v24h12M8 32h10M14 26v6" />
            <rect x="20" y="10" width="25" height="18" fill="#222" />
            <path d="M30 28v5M26 33h9" />
        </svg>
        <span className="ml-[37px] tracking-[0.4px]">Fri 1:57 AM</span>
        <svg className="ml-[50px]" width="32" height="36" viewBox="0 0 32 36" fill="none" stroke="#e8e8e8" strokeWidth="2.4">
            <circle cx="13" cy="14" r="10" />
            <path d="M20 23l9 12" />
        </svg>
        <svg className="ml-[30px]" width="36" height="22" viewBox="0 0 36 22" fill="#e8e8e8">
            <rect x="0" y="0" width="5" height="4" /><rect x="9" y="0" width="27" height="3.5" />
            <rect x="0" y="9" width="5" height="4" /><rect x="9" y="9" width="27" height="3.5" />
            <rect x="0" y="18" width="5" height="4" /><rect x="9" y="18" width="27" height="3.5" />
        </svg>
    </div>
);

const App = () => (
    <div className="relative w-[2184px] h-[1518px] flex flex-col overflow-hidden font-['Liberation_Sans',sans-serif] bg-[linear-gradient(90deg,#4a2a1c_50%,#7a5010_50%)]">
        <MenuBar />
        <div className="h-[55px] rounded-t-[8px] bg-gradient-to-b from-[#f6f6f6] to-[#e9e9e9] border-b-2 border-[#b9b9b9] grid grid-cols-[1fr_auto_1fr] items-center px-[16px] pb-[8px]">
            <div className="flex gap-[16px]">
                <Light color="bg-[#d8d8d8]" />
                <Light color="bg-[#d8d8d8]" />
                <Light color="bg-[#d8d8d8]" />
            </div>
            <div className="flex items-center ml-[20px] text-[26px] tracking-[0.9px] text-[#b8b8b8]">
                Untitled
                <svg className="ml-[7px] mt-[2px]" width="16" height="10" viewBox="0 0 16 10" fill="none" stroke="#bbb" strokeWidth="2"><path d="M1 1l7 7 7-7" /></svg>
            </div>
        </div>
        <div className="h-[120px] bg-gradient-to-b from-[#e6e6e6] to-[#c9c9c9] border-b-[3px] border-[#aaaaaa] rounded-t-[8px] flex flex-col">
            <div className="h-[47px] shrink-0 grid grid-cols-[1fr_auto_1fr] items-center px-[16px]">
                <div className="flex gap-[16px]">
                    <Light color="bg-[#fc5753]" />
                    <Light color="bg-[#fdbc40]" />
                    <Light color="bg-[#33c748]" />
                </div>
                <div className="flex items-center ml-[20px] text-[26px] tracking-[0.9px] text-[#444444]">
                    Untitled 2
                    <svg className="ml-[8px] mt-[2px]" width="16" height="10" viewBox="0 0 16 10" fill="none" stroke="#999" strokeWidth="2"><path d="M1 1l7 7 7-7" /></svg>
                </div>
            </div>
            <Toolbar />
        </div>
        <div className="h-[1190px] flex bg-white rounded-b-[10px] overflow-hidden">
            <LeftPane />
            <Calendar />
        </div>
        <div className="h-[1px] shrink-0" />
        <Dock />
        <Watermark />
    </div>
);

export default App;
